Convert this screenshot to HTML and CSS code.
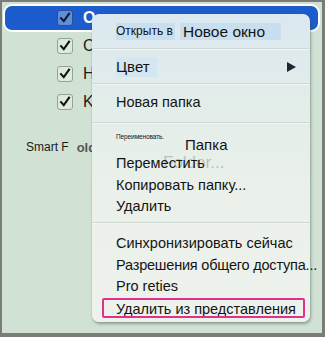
FILE: index.html
```html
<!DOCTYPE html>
<html lang="ru">
<head>
<meta charset="utf-8">
<link rel="stylesheet" href="styles.css">
</head>
<body>
<div class="frame">
  <div class="list">
    <div class="row selected">
      <span class="check sel"><svg viewBox="0 0 16 16" width="16" height="16"><path d="M3.5 8.2 L6.6 11.6 L12.6 3.2" fill="none" stroke="#0d1a2e" stroke-width="2.4" stroke-linecap="square"/></svg></span>
      <span class="label light">O</span>
    </div>
    <div class="row">
      <span class="check"><svg viewBox="0 0 16 16" width="16" height="16"><path d="M3.5 8.2 L6.6 11.6 L12.6 3.2" fill="none" stroke="#111" stroke-width="2.4" stroke-linecap="square"/></svg></span>
      <span class="label">C</span>
    </div>
    <div class="row">
      <span class="check"><svg viewBox="0 0 16 16" width="16" height="16"><path d="M3.5 8.2 L6.6 11.6 L12.6 3.2" fill="none" stroke="#111" stroke-width="2.4" stroke-linecap="square"/></svg></span>
      <span class="label">H</span>
    </div>
    <div class="row">
      <span class="check"><svg viewBox="0 0 16 16" width="16" height="16"><path d="M3.5 8.2 L6.6 11.6 L12.6 3.2" fill="none" stroke="#111" stroke-width="2.4" stroke-linecap="square"/></svg></span>
      <span class="label">K</span>
    </div>
    <div class="smart"><span>Smart F</span><span class="old">old</span></div>
  </div>

  <div class="menu">
    <div class="item first"><span class="hl small">Открыть в</span><span class="hl big">Новое окно</span></div>
    <div class="sep"></div>
    <div class="item color"><span class="hl">Цвет</span><span class="arrow"></span></div>
    <div class="sep"></div>
    <div class="item newf">Новая папка</div>
    <div class="sep"></div>
    <div class="item rename"><span class="tiny">Переименовать.</span><span class="papka">Папка</span></div>
    <div class="item move"><span class="ghost">Folder...</span><span class="txt">Переместить</span></div>
    <div class="item">Копировать папку...</div>
    <div class="item">Удалить</div>
    <div class="sep s4"></div>
    <div class="item sync">Синхронизировать сейчас</div>
    <div class="item narrow">Разрешения общего доступа...</div>
    <div class="item">Pro reties</div>
    <div class="item boxed"><span class="pink">Удалить из представления</span></div>
  </div>
</div>
</body>
</html>
```
FILE: styles.css
```css
html, body {
  margin: 0;
  padding: 0;
}
body {
  width: 325px;
  height: 337px;
  overflow: hidden;
  font-family: "Liberation Sans", Arial, sans-serif;
}
.frame {
  position: relative;
  box-sizing: border-box;
  width: 325px;
  height: 337px;
  border: 2px solid #7a7c7a;
  border-right-width: 3px;
  border-bottom-width: 4px;
  background: #d1e2d5;
  padding: 2px 0 0 1px;
}
.list {
  display: flex;
  flex-direction: column;
}
.row {
  display: flex;
  align-items: center;
  height: 28px;
  padding-left: 54px;
  gap: 10px;
}
.row.selected {
  box-sizing: border-box;
  height: 28px;
  width: 317px;
  background: #1c5ccc;
  border: 2px solid #fff;
  border-radius: 9px;
  padding-left: 52px;
}
.check {
  box-sizing: border-box;
  width: 16px;
  height: 16px;
  border: 1px solid #8fa597;
  border-radius: 3px;
  background: #dfeadf;
  display: flex;
  align-items: center;
  justify-content: center;
}
.check svg {
  display: block;
}
.check.sel {
  background: #5f8fd8;
  border-color: #2c4f8f;
}
.label {
  font-size: 16px;
  color: #1c1c1c;
}
.label.light {
  color: #fff;
  font-weight: bold;
}
.smart {
  margin-top: 24px;
  padding-left: 23px;
  font-size: 12px;
  color: #1a1a1a;
  display: flex;
  gap: 8px;
}
.smart .old {
  color: #555;
  font-weight: bold;
  font-size: 13px;
}
.menu {
  position: absolute;
  left: 90px;
  top: 12px;
  width: 218px;
  height: 308px;
  box-sizing: border-box;
  border-radius: 7px;
  background: linear-gradient(180deg, #dbe8f0 0%, #e3ede9 30%, #ebf1ea 60%, #edf2ec 100%);
  box-shadow: 1px 2px 3px rgba(60, 80, 70, 0.45), 0 0 1px rgba(60, 80, 70, 0.35);
  padding: 0 0 0 24px;
  font-size: 14.5px;
  color: #141414;
}
.item {
  height: 21.7px;
  line-height: 22px;
  white-space: nowrap;
}
.item.narrow {
  letter-spacing: -0.2px;
}
.hl {
  background: #c8dff0;
  display: inline-block;
}
.item.first {
  height: 34px;
  padding-top: 9px;
  box-sizing: border-box;
  line-height: 17px;
  display: flex;
}
.hl.small {
  font-size: 12px;
  width: 59px;
  height: 17px;
}
.hl.big {
  font-size: 15.5px;
  margin-left: 5px;
  width: 101px;
  height: 17px;
  padding-left: 3px;
  box-sizing: border-box;
}
.sep {
  height: 2px;
  margin-left: -24px;
  background: linear-gradient(180deg, #cdd9d3 0 50%, #f2f6f2 50% 100%);
}
.item.color {
  height: 33px;
  box-sizing: border-box;
  padding-top: 7px;
  display: flex;
  align-items: flex-start;
  position: relative;
}
.item.color .hl {
  background: #d4e6f0;
  width: 41px;
  line-height: 20px;
  font-size: 15px;
}
.arrow {
  position: absolute;
  left: 171px;
  top: 12px;
  width: 0;
  height: 0;
  border-top: 5px solid transparent;
  border-bottom: 5px solid transparent;
  border-left: 9px solid #1f2730;
}
.item.newf {
  height: 37px;
  box-sizing: border-box;
  padding-top: 6px;
  line-height: 22px;
}
.item.rename {
  height: 28px;
  position: relative;
  line-height: normal;
}
.tiny {
  position: absolute;
  left: 0;
  top: 9px;
  font-size: 6.5px;
  letter-spacing: -0.1px;
}
.papka {
  position: absolute;
  left: 69px;
  top: 13px;
  font-size: 15px;
  line-height: 15px;
}
.item.move {
  position: relative;
}
.ghost {
  position: absolute;
  left: 47px;
  top: 2px;
  font-size: 17px;
  line-height: 17px;
  color: #b9bfbc;
}
.txt {
  position: relative;
}
.sep.s4 {
  margin-top: 5px;
}
.item.sync {
  margin-top: 8px;
}
.item.boxed {
  position: relative;
  margin-top: 1px;
}
.pink {
  position: relative;
}
.pink::before {
  content: "";
  position: absolute;
  left: -14px;
  right: -9px;
  top: -3px;
  bottom: -1px;
  border: 2px solid #e2318c;
  border-radius: 2px;
}
```
